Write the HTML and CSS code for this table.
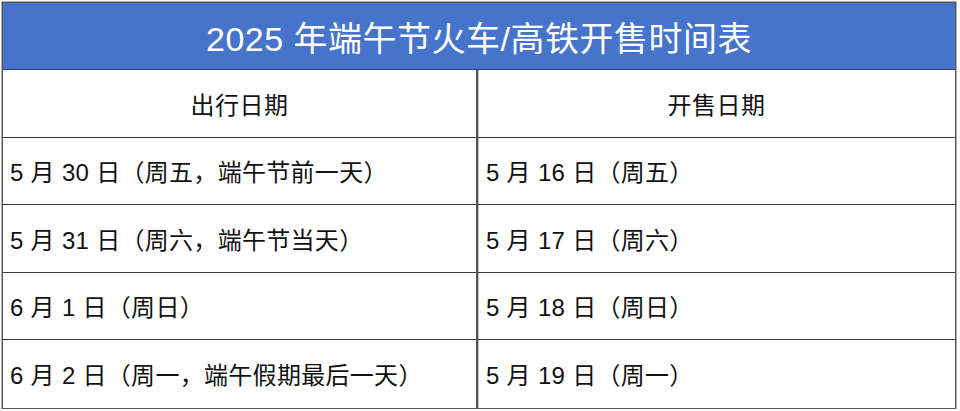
FILE: index.html
```html
<!DOCTYPE html>
<html lang="zh-CN">
<head>
<meta charset="utf-8">
<title>2025 年端午节火车/高铁开售时间表</title>
<link rel="stylesheet" href="styles.css">
</head>
<body>
<div class="sheet">
  <div class="title">2025 年端午节火车/高铁开售时间表</div>
  <div class="grid">
    <div class="cell head">出行日期</div>
    <div class="cell head">开售日期</div>
    <div class="cell">5 月 30 日（周五，端午节前一天）</div>
    <div class="cell">5 月 16 日（周五）</div>
    <div class="cell">5 月 31 日（周六，端午节当天）</div>
    <div class="cell">5 月 17 日（周六）</div>
    <div class="cell">6 月 1 日（周日）</div>
    <div class="cell">5 月 18 日（周日）</div>
    <div class="cell">6 月 2 日（周一，端午假期最后一天）</div>
    <div class="cell">5 月 19 日（周一）</div>
  </div>
</div>
</body>
</html>
```
FILE: styles.css
```css
html, body {
  margin: 0;
  padding: 0;
  background: #ffffff;
}
body {
  padding: 2px 0 0 2px;
  font-family: "Liberation Sans", "Noto Sans CJK SC", sans-serif;
  color: #111111;
}
.sheet {
  width: 954px;
  box-sizing: border-box;
  border: 1px solid #555555;
  box-shadow: 0 0 0 1px #b0b0b0;
}
.title {
  height: 66px;
  background: #4674ca;
  color: #ffffff;
  font-size: 34px;
  display: flex;
  align-items: center;
  justify-content: center;
  border-bottom: 1px solid #2f3f5f;
  letter-spacing: 0.5px;
}
.grid {
  display: grid;
  grid-template-columns: 475px 1fr;
  grid-auto-rows: 67.5px;
}
.cell {
  display: flex;
  align-items: center;
  padding-left: 7px;
  font-size: 24px;
  letter-spacing: 0.3px;
  border-bottom: 1px solid #3a3a3a;
  box-sizing: border-box;
}
.cell:nth-child(odd) {
  border-right: 2px solid #555555;
  box-shadow: 1px 0 0 #c0c0c0;
}
.cell:nth-child(even) {
  padding-left: 8px;
}
.cell.head {
  justify-content: center;
  padding-left: 0;
  font-size: 24px;
  letter-spacing: 0.5px;
}
.cell:nth-last-child(-n+2) {
  border-bottom: none;
}
```
